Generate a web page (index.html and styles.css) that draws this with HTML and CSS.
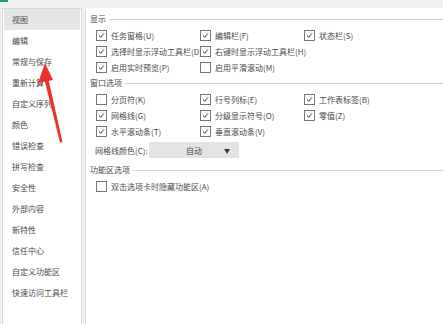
FILE: index.html
```html
<!DOCTYPE html>
<html lang="zh-CN">
	<head>
		<meta charset="UTF-8" />
		<meta name="viewport" content="width=device-width, initial-scale=1.0" />
		<title>选项 - 视图</title>
		<link rel="stylesheet" href="styles.css">
	</head>
	<body>
		<div class="topbar"><span class="accent"></span></div>

		<div class="main">
			<ul class="nav">
				<li class="active">视图</li>
				<li>编辑</li>
				<li>常规与保存</li>
				<li>重新计算</li>
				<li>自定义序列</li>
				<li>颜色</li>
				<li>错误检查</li>
				<li>拼写检查</li>
				<li>安全性</li>
				<li>外部内容</li>
				<li>新特性</li>
				<li>信任中心</li>
				<li>自定义功能区</li>
				<li>快速访问工具栏</li>
			</ul>

			<div class="content">
				<div class="group-title"><span>显示</span></div>
				<div class="grid">
					<label class="check on">任务窗格(U)</label>
					<label class="check on">编辑栏(F)</label>
					<label class="check on">状态栏(S)</label>
					<label class="check on">选择时显示浮动工具栏(D)</label>
					<label class="check on">右键时显示浮动工具栏(H)</label>
					<span></span>
					<label class="check on">启用实时预览(P)</label>
					<label class="check">启用平滑滚动(M)</label>
				</div>

				<div class="group-title"><span>窗口选项</span></div>
				<div class="grid">
					<label class="check">分页符(K)</label>
					<label class="check on">行号列标(E)</label>
					<label class="check on">工作表标签(B)</label>
					<label class="check on">网格线(G)</label>
					<label class="check on">分级显示符号(O)</label>
					<label class="check on">零值(Z)</label>
					<label class="check on">水平滚动条(T)</label>
					<label class="check on">垂直滚动条(V)</label>
				</div>

				<div class="color-row">
					<span class="color-label">网格线颜色(C):</span>
					<div class="select">
						<span>自动</span>
						<span class="caret">▼</span>
					</div>
				</div>

				<div class="group-title ribbon"><span>功能区选项</span></div>
				<div class="grid">
					<label class="check wide">双击选项卡时隐藏功能区(A)</label>
				</div>
			</div>
		</div>

		<!-- 标注箭头 -->
		<svg class="arrow" width="443" height="324" viewBox="0 0 443 324">
			<polygon points="45,63 38,83 53,80" fill="#e8322e" />
			<polygon points="44.5,80 48.5,79.5 62.5,142 60,142.5" fill="#e8322e" />
		</svg>
	</body>
</html>
```

FILE: styles.css
```css
* {
	box-sizing: border-box;
}
body {
	margin: 0;
	width: 443px;
	height: 324px;
	overflow: hidden;
	position: relative;
	background-color: #f0f0f0;
	font-family: "Noto Sans CJK SC", "Noto Sans", sans-serif;
	font-size: 8px;
	color: #4a4a4a;
}
.topbar {
	height: 8px;
}
.accent {
	display: block;
	width: 8px;
	height: 2px;
	background-color: #21a366;
}
.main {
	display: flex;
	gap: 3px;
	height: 316px;
	padding-left: 2px;
}
.nav {
	list-style: none;
	margin: 0;
	padding: 0 1px;
	width: 80px;
	background-color: white;
	border: 1px solid #d9d9d9;
	border-bottom: none;
}
.nav li {
	height: 21px;
	line-height: 21px;
	padding-left: 8px;
	white-space: nowrap;
}
.nav li.active {
	background-color: #e6e6e6;
}
.content {
	flex: 1;
	background-color: white;
	border-left: 1px solid #d9d9d9;
	padding-left: 4px;
	padding-top: 5px;
}
.group-title {
	display: flex;
	align-items: center;
	height: 12px;
	line-height: 12px;
	margin-top: 2px;
}
.group-title:first-child {
	margin-top: 0;
}
.group-title::after {
	content: "";
	flex: 1;
	border-top: 1px solid #d4d4d4;
	margin-left: 3px;
}
.group-title.ribbon {
	margin-top: 6px;
}
.grid {
	display: grid;
	grid-template-columns: 104px 104px auto;
	grid-auto-rows: 16px;
	padding-left: 6px;
	margin-top: 2px;
}
.check {
	display: flex;
	align-items: center;
	gap: 4px;
	white-space: nowrap;
}
.check.wide {
	grid-column: span 3;
}
.check::before {
	content: "";
	flex: none;
	width: 9px;
	height: 9px;
	border: 1px solid #767676;
	background-color: white;
}
.check.on::before {
	background-image: url("data:image/svg+xml;utf8,<svg xmlns='http://www.w3.org/2000/svg' width='7' height='7' viewBox='0 0 7 7'><path d='M1 3.6 L2.8 5.3 L6 1.4' fill='none' stroke='%23444' stroke-width='1'/></svg>");
	background-repeat: no-repeat;
	background-position: center;
}
.color-row {
	display: flex;
	align-items: center;
	height: 16px;
	margin-top: 3px;
	padding-left: 5px;
}
.color-label {
	width: 54px;
	white-space: nowrap;
}
.select {
	display: flex;
	align-items: center;
	justify-content: center;
	position: relative;
	width: 90px;
	height: 16px;
	background-color: #e3e3e3;
}
.caret {
	position: absolute;
	right: 9px;
	font-size: 6px;
	color: #333;
}
.arrow {
	position: absolute;
	left: 0;
	top: 0;
	pointer-events: none;
}
```
